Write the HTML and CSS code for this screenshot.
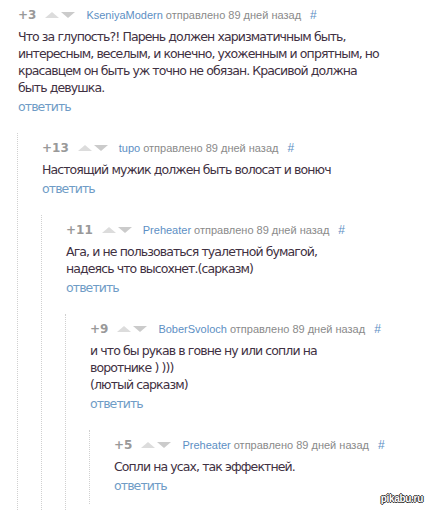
FILE: index.html
```html
<!DOCTYPE html>
<html>
<head>
    <meta charset="utf-8" />
    <title>Комментарии</title>
    <link rel="stylesheet" href="styles.css">
</head>
<body>
    <div class="comments">
        <div class="comment">
            <div class="comment-head">
                <span class="rating">+3</span>
                <span class="vote vote-up"></span>
                <span class="vote vote-down"></span>
                <a href="#" class="author">KseniyaModern</a>
                <span class="meta">отправлено 89 дней назад</span>
                <a href="#" class="anchor">#</a>
            </div>
            <div class="comment-text">
                Что за глупость?! Парень должен харизматичным быть,<br>
                интересным, веселым, и конечно, ухоженным и опрятным, но<br>
                красавцем он быть уж точно не обязан. Красивой должна<br>
                быть девушка.
            </div>
            <a href="#" class="reply">ответить</a>

            <div class="children">
                <div class="comment">
                    <div class="comment-head">
                        <span class="rating">+13</span>
                        <span class="vote vote-up"></span>
                        <span class="vote vote-down"></span>
                        <a href="#" class="author">tupo</a>
                        <span class="meta">отправлено 89 дней назад</span>
                        <a href="#" class="anchor">#</a>
                    </div>
                    <div class="comment-text">
                        Настоящий мужик должен быть волосат и вонюч
                    </div>
                    <a href="#" class="reply">ответить</a>

                    <div class="children">
                        <div class="comment">
                            <div class="comment-head">
                                <span class="rating">+11</span>
                                <span class="vote vote-up"></span>
                                <span class="vote vote-down"></span>
                                <a href="#" class="author">Preheater</a>
                                <span class="meta">отправлено 89 дней назад</span>
                                <a href="#" class="anchor">#</a>
                            </div>
                            <div class="comment-text">
                                Ага, и не пользоваться туалетной бумагой,<br>
                                надеясь что высохнет.(сарказм)
                            </div>
                            <a href="#" class="reply">ответить</a>

                            <div class="children">
                                <div class="comment">
                                    <div class="comment-head">
                                        <span class="rating">+9</span>
                                        <span class="vote vote-up"></span>
                                        <span class="vote vote-down"></span>
                                        <a href="#" class="author">BoberSvoloch</a>
                                        <span class="meta">отправлено 89 дней назад</span>
                                        <a href="#" class="anchor">#</a>
                                    </div>
                                    <div class="comment-text">
                                        и что бы рукав в говне ну или сопли на<br>
                                        воротнике ) )))<br>
                                        (лютый сарказм)
                                    </div>
                                    <a href="#" class="reply">ответить</a>

                                    <div class="children">
                                        <div class="comment">
                                            <div class="comment-head">
                                                <span class="rating">+5</span>
                                                <span class="vote vote-up"></span>
                                                <span class="vote vote-down"></span>
                                                <a href="#" class="author">Preheater</a>
                                                <span class="meta">отправлено 89 дней назад</span>
                                                <a href="#" class="anchor">#</a>
                                            </div>
                                            <div class="comment-text">
                                                Сопли на усах, так эффектней.
                                            </div>
                                            <a href="#" class="reply">ответить</a>
                                        </div>
                                    </div>
                                </div>
                            </div>
                        </div>
                    </div>
                </div>
            </div>
        </div>
    </div>

    <div class="watermark">pikabu.ru</div>
</body>
</html>
```

FILE: styles.css
```css
html, body {
    overflow: hidden;
}

body {
    margin: 0;
    background-color: #fff;
    font-family: "DejaVu Sans", Verdana, sans-serif;
}

.comments {
    width: 400px;
    padding-left: 18px;
}

.comment {
    padding-top: 5px;
}

.comment-head {
    display: flex;
    align-items: center;
    height: 20px;
    white-space: nowrap;
    font-family: "Liberation Sans", Arial, sans-serif;
}

.rating {
    font-family: "DejaVu Sans", Verdana, sans-serif;
    font-weight: bold;
    font-size: 12px;
    color: #999;
    margin-right: 9px;
}

.vote {
    width: 0;
    height: 0;
    border-left: 7px solid transparent;
    border-right: 7px solid transparent;
}

.vote-up {
    border-bottom: 6px solid #dcdcdc;
    margin-right: 2px;
}

.vote-down {
    border-top: 6px solid #cbcbcb;
    margin-right: 11px;
}

.author {
    font-size: 11px;
    color: #5d8fc4;
    text-decoration: none;
}

.meta {
    font-size: 11px;
    color: #8a8a8a;
    margin-left: 3px;
}

.anchor {
    font-size: 12px;
    color: #5d8fc4;
    text-decoration: none;
    margin-left: 9px;
}

.comment-text {
    margin-top: 3px;
    font-size: 12.5px;
    letter-spacing: -0.9px;
    line-height: 17px;
    white-space: nowrap;
    color: #3f3142;
}

.reply {
    display: block;
    margin-top: 2px;
    font-size: 12.5px;
    letter-spacing: -0.9px;
    line-height: 17px;
    color: #6f9cc6;
    text-decoration: none;
}

.children {
    margin-top: 18px;
    margin-left: -1px;
    padding-left: 24px;
    padding-bottom: 10px;
    border-left: 1px dotted #d0d0d0;
}

.watermark {
    position: absolute;
    right: 7px;
    bottom: 6px;
    font-family: "Liberation Sans", Arial, sans-serif;
    font-size: 10px;
    font-weight: bold;
    letter-spacing: -0.3px;
    color: #fff;
    text-shadow: 1px 0 0 #333, -1px 0 0 #333, 0 1px 0 #333, 0 -1px 0 #333;
}
```
